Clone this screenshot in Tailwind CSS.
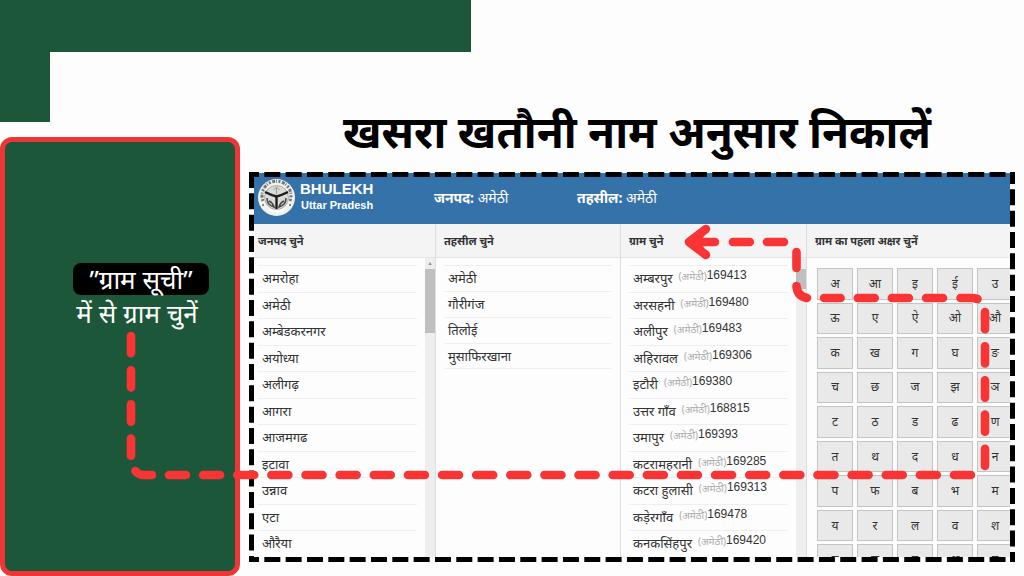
<!DOCTYPE html>
<html lang="hi">
<head>
    <meta charset="UTF-8">
    <meta name="viewport" content="width=device-width, initial-scale=1.0">
    <title>खसरा खतौनी नाम अनुसार निकालें</title>
    <script src="https://cdn.jsdelivr.net/npm/@tailwindcss/browser@4"></script>
</head>
<body class="relative flex flex-col min-h-screen overflow-hidden bg-[#fdfdfd] font-['Noto_Sans','Noto_Sans_Devanagari',sans-serif]">

    <div class="w-[46%] h-[52px] shrink-0 bg-[#1d573a]"></div>

    <div class="flex flex-1">
        <div class="w-60 shrink-0 flex flex-col">
            <div class="w-[50px] h-[70px] bg-[#1d573a]"></div>
            <aside class="mt-[15px] flex-1 pt-[121px] bg-[#1d573a] border-[5px] border-[#ee3637] rounded-xl text-white text-[26px] text-center pl-[42px]">
                <p class="leading-8"><span class="inline-block w-[136px] bg-black rounded-lg">”ग्राम सूची”</span></p>
                <p class="pr-2 leading-9">में से ग्राम चुनें</p>
            </aside>
        </div>

        <main class="flex-1 min-w-0 flex flex-col pt-[49px] pl-[9px] pr-[9px] pb-[14px]">
            <h1 class="h-[71px] pl-[10px] text-[44px] leading-[60px] font-bold text-center text-black whitespace-nowrap">खसरा खतौनी नाम अनुसार निकालें</h1>

            <section class="relative flex-1 flex flex-col px-[5px] pt-px pb-[5px] overflow-hidden text-[13px] text-[#333]">
                <header class="h-[51px] pt-1 flex bg-[#3672aa] text-white">
                    <div class="w-[180px] flex gap-[5px] pl-1 pt-[2px]">
                        <svg class="w-[37px] h-[37px]" viewBox="0 0 37 37" fill="none">
                            <circle cx="18.500" cy="18.500" r="18.500" fill="#f1f1ee"/>
                            <path d="M5 22A14.500 14.500 0 1 1 32 22" stroke="#777" stroke-width="3" stroke-dasharray="2 1.500 3 1 1 1.500"/>
                            <circle cx="18.500" cy="18.500" r="12" fill="#d9dbd8" stroke="#888" stroke-width=".6"/>
                            <path d="M7 13q6 3 11.500 4.500Q24 16 30 13M18.500 17v13" stroke="#1c1c1c" stroke-width="2.400"/>
                            <path d="M18.500 8v7M15.500 11l3-3 3 3" stroke="#999"/>
                            <path d="M9 19c0 5 3 8 7 9-1-3-2-5-5-6M28 19c0 5-3 8-7 9 1-3 2-5 5-6" stroke="#444" stroke-width="1.500"/>
                            <path d="M11 31c4 2 11 2 15 0" stroke="#fff" stroke-width="2"/>
                            <circle cx="5" cy="26" r="1" fill="#666"/>
                            <circle cx="32" cy="26" r="1" fill="#666"/>
                        </svg>
                        <div class="font-['Liberation_Sans',sans-serif] font-bold">
                            <div class="text-[15px] leading-[19px]">BHULEKH</div>
                            <div class="text-[11px] leading-[14px] pl-px">Uttar Pradesh</div>
                        </div>
                    </div>
                    <div class="w-[143px] pt-[11px] text-sm"><b>जनपद:</b> अमेठी</div>
                    <div class="pt-[11px] text-sm"><b>तहसील:</b> अमेठी</div>
                </header>

                <div class="flex-1 grid grid-cols-[182px_185px_186px_1fr] bg-[#fdfdfd]">
                    <div class="flex flex-col border-r border-[#ddd]">
                        <h2 class="h-[34px] px-1 leading-[34px] text-[11px] font-bold bg-[#f4f4f5] border-b border-[#e4e4e4]">जनपद चुने</h2>
                        <div class="flex-1 flex">
                            <ul id="janpad" class="flex-1 grid auto-rows-fr pt-[7px] pl-1 pr-2"></ul>
                            <div class="w-[10px] bg-[#eeeeee]">
                                <div class="h-[11px] text-[5px] leading-[11px] text-center text-[#888]">▲</div>
                                <div class="h-[64px] bg-[#bfbfbf]"></div>
                            </div>
                        </div>
                    </div>
                    <div class="border-r border-[#ddd]">
                        <h2 class="h-[34px] px-2 leading-[34px] text-[11px] font-bold bg-[#f4f4f5] border-b border-[#e4e4e4]">तहसील चुने</h2>
                        <ul id="tehsil" class="pt-[7px] pl-2 pr-2"></ul>
                    </div>
                    <div class="flex flex-col border-r border-[#ddd]">
                        <h2 class="h-[34px] px-2 leading-[34px] text-[11px] font-bold bg-[#f4f4f5] border-b border-[#e4e4e4]">ग्राम चुने</h2>
                        <div class="flex-1 flex">
                            <ul id="gram" class="flex-1 grid auto-rows-fr pt-[7px] pl-2 pr-2"></ul>
                            <div class="w-[10px] bg-[#eeeeee] pt-[11px]">
                                <div class="h-[20px] bg-[#bfbfbf]"></div>
                            </div>
                        </div>
                    </div>
                    <div class="flex flex-col min-w-0 overflow-hidden">
                        <h2 class="h-[34px] px-2 leading-[34px] text-[11px] font-bold bg-[#f4f4f5] border-b border-[#e4e4e4]">ग्राम का पहला अक्षर चुनें</h2>
                        <div class="h-0 grow overflow-hidden pt-[10px] pl-[10px]">
                            <div id="letters" class="h-[308px] grid grid-cols-[repeat(5,36px)] grid-rows-9 gap-x-1 gap-y-[3px]"></div>
                        </div>
                    </div>
                </div>

                <!-- dashed frame -->
                <svg class="absolute inset-0 w-full h-full" stroke="#000" stroke-width="5">
                    <line x1="0" y1="2.500" x2="100%" y2="2.500" stroke-dasharray="16 5.330" stroke-dashoffset="6"/>
                    <line x1="0" y1="387.500" x2="100%" y2="387.500" stroke-dasharray="16 5.330" stroke-dashoffset="6"/>
                    <line x1="2.500" y1="0" x2="2.500" y2="100%" stroke-dasharray="16 5.330"/>
                    <line x1="763.500" y1="0" x2="763.500" y2="100%" stroke-dasharray="16 5.330" stroke-dashoffset="4"/>
                </svg>
            </section>
        </main>
    </div>

    <!-- arrow from the caption to the village list -->
    <svg class="absolute top-0 left-0 w-full pointer-events-none" viewBox="0 0 1024 576" fill="none" stroke="#f83435" stroke-width="8.600" stroke-linecap="round" stroke-linejoin="round">
        <path d="M131 336V460" stroke-dasharray="17.200 17"/>
        <path d="M135.500 471Q139 475 143 475H152"/>
        <path d="M169 475H972" stroke-dasharray="17 17.130"/>
        <path d="M985 466V312" stroke-dasharray="17.200 17"/>
        <path d="M977.500 299Q974 298 971 298H960.500"/>
        <path d="M943 298H824" stroke-dasharray="17 17.130"/>
        <path d="M807 298Q797 296 796.500 286M796.500 268V252"/>
        <path d="M784 242H726" stroke-dasharray="17 17.130"/>
        <path d="M715 242H690"/>
        <path d="M706 229L689 242L706 255L702 242Z" fill="#f83435" stroke="none"/>
        <path d="M706 229L689 242L706 255"/>
    </svg>

    <script>
        const janpad = ['अमरोहा', 'अमेठी', 'अम्बेडकरनगर', 'अयोध्या', 'अलीगढ़', 'आगरा', 'आजमगढ', 'इटावा', 'उन्नाव', 'एटा', 'औरैया'];
        const tehsil = ['अमेठी', 'गौरीगंज', 'तिलोई', 'मुसाफिरखाना'];
        const gram = [
            ['अम्बरपुर', 169413], ['अरसहनी', 169480], ['अलीपुर', 169483], ['अहिरावल', 169306],
            ['इटौरी', 169380], ['उत्तर गाँव', 168815], ['उमापुर', 169393], ['कटरामहरानी', 169285],
            ['कटरा हुलासी', 169313], ['कड़ेरगाँव', 169478], ['कनकसिंहपुर', 169420]
        ];
        const letters = 'अ आ इ ई उ ऊ ए ऐ ओ औ क ख ग घ ङ च छ ज झ ञ ट ठ ड ढ ण त थ द ध न प फ ब भ म य र ल व श ष स ह क्ष त्र'.split(' ');

        document.getElementById('janpad').innerHTML = janpad.map(n =>
            `<li class="pl-1 leading-6 border-t border-[#eee]">${n}</li>`).join('');
        document.getElementById('tehsil').innerHTML = tehsil.map(n =>
            `<li class="h-[26px] pl-1 leading-6 border-t border-[#eee] last:border-b">${n}</li>`).join('');
        document.getElementById('gram').innerHTML = gram.map(([n, code]) =>
            `<li class="flex pl-1 leading-6 border-t border-[#eee] whitespace-nowrap">${n}<span class="ml-[6px] text-[10px] leading-5 text-[#aaa]">(अमेठी)</span><span class="font-['Liberation_Sans',sans-serif] text-xs leading-[18px]">${code}</span></li>`).join('');
        document.getElementById('letters').innerHTML = letters.map(l =>
            `<button class="bg-[#e9e9e9] border border-[#c4c4c4] text-[12px]">${l}</button>`).join('');
    </script>

</body>
</html>
